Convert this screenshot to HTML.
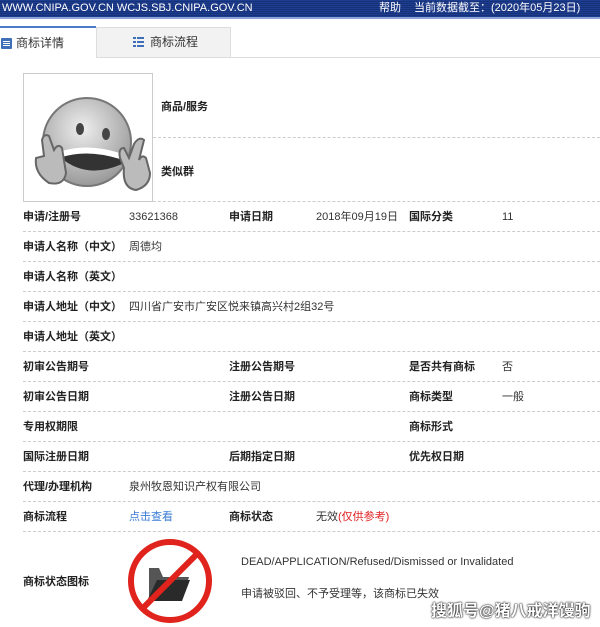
<!DOCTYPE html>
<html><head><meta charset="utf-8"><style>
*{margin:0;padding:0;box-sizing:border-box}
body{width:600px;height:627px;overflow:hidden;background:#fff;font-family:"Liberation Sans","Noto Sans CJK SC",sans-serif;font-size:11px;color:#333;position:relative}
.top{position:absolute;left:0;top:0;width:600px;height:19px;background:repeating-linear-gradient(#1d3d8f 0 1px,#16307a 1px 2px);color:#fff;font-size:11px;line-height:17px;border-bottom:2px solid #8ea4d8}
.top span{position:absolute;top:0}
.tabs{position:absolute;top:26px;left:0;width:600px;height:32px;border-bottom:1px solid #ddd}
.tab1{position:absolute;left:0;top:0;width:96px;height:32px;border-top:2px solid #4a7cc9;background:#fff;line-height:30px;padding-left:16px;font-size:12px}
.tab2{position:absolute;left:96px;top:1px;width:135px;height:31px;background:#f2f2f2;border:1px solid #ddd;line-height:29px;padding-left:53px;font-size:12px}
.row{position:absolute;left:23px;right:0;height:30px;border-bottom:1px dashed #ccc;line-height:30px}
.row b{position:absolute;font-weight:bold;color:#222}
.row span{position:absolute}
.img{position:absolute;left:23px;top:73px;width:130px;height:129px;border:1px solid #ccc;background:#fff}
</style></head><body>
<div class="top"><span style="left:2px">WWW.CNIPA.GOV.CN WCJS.SBJ.CNIPA.GOV.CN</span><span style="left:379px">帮助</span><span style="left:414px">当前数据截至：(2020年05月23日)</span></div>
<div class="tabs">
<div class="tab1"><svg style="position:absolute;left:1px;top:10px" width="11" height="11"><rect x="0" y="0" width="11" height="11" rx="1" fill="#3f6fb8"/><rect x="2" y="3" width="7" height="1" fill="#fff"/><rect x="2" y="5" width="7" height="1" fill="#fff"/><rect x="2" y="7" width="7" height="1" fill="#fff"/></svg>商标详情</div>
<div class="tab2"><svg style="position:absolute;left:36px;top:9px" width="11" height="10"><g fill="#3f6fb8"><rect x="0" y="0" width="3" height="2"/><rect x="4" y="0" width="7" height="2"/><rect x="0" y="4" width="3" height="2"/><rect x="4" y="4" width="7" height="2"/><rect x="0" y="8" width="3" height="2"/><rect x="4" y="8" width="7" height="2"/></g></svg>商标流程</div>
</div>
<div class="img"><svg width="128" height="127" viewBox="0 0 128 127">
<defs><radialGradient id="g" cx="45%" cy="35%" r="65%"><stop offset="0" stop-color="#eee"/><stop offset="1" stop-color="#999"/></radialGradient></defs>
<circle cx="63" cy="68" r="44" fill="url(#g)" stroke="#777" stroke-width="2"/>
<ellipse cx="56" cy="55" rx="4" ry="6" fill="#444"/><ellipse cx="82" cy="60" rx="4" ry="6" fill="#444"/>
<path d="M36 83 Q62 106 98 90 Q94 70 36 83Z" fill="#333"/><path d="M38 83 Q64 75 96 85 L96 79 Q64 69 38 77Z" fill="#fff"/>
<path d="M12 84 Q10 99 25 109 Q40 112 42 99 L38 74 Q34 69 30 76 L25 62 Q20 59 18 66 L20 82Z" fill="#bbb" stroke="#666" stroke-width="2"/>
<path d="M100 94 Q98 114 112 116 Q126 112 126 99 L122 84 Q118 80 115 86 L120 66 Q115 62 110 70 L105 84 L100 74 Q94 74 96 84Z" fill="#bbb" stroke="#666" stroke-width="2"/>
</svg></div>
<div style="position:absolute;left:161px;top:98px;font-weight:bold;color:#222">商品/服务</div>
<div style="position:absolute;left:153px;right:0;top:137px;border-top:1px dashed #ccc"></div>
<div style="position:absolute;left:161px;top:163px;font-weight:bold;color:#222">类似群</div>
<div style="position:absolute;left:23px;right:0;top:201px;border-top:1px dashed #ccc"></div>
<div class="row" style="top:202px"><b style="left:0">申请/注册号</b><span style="left:106px">33621368</span><b style="left:206px">申请日期</b><span style="left:293px">2018年09月19日</span><b style="left:386px">国际分类</b><span style="left:479px">11</span></div>
<div class="row" style="top:232px"><b style="left:0">申请人名称（中文）</b><span style="left:106px">周德均</span></div>
<div class="row" style="top:262px"><b style="left:0">申请人名称（英文）</b></div>
<div class="row" style="top:292px"><b style="left:0">申请人地址（中文）</b><span style="left:106px">四川省广安市广安区悦来镇高兴村2组32号</span></div>
<div class="row" style="top:322px"><b style="left:0">申请人地址（英文）</b></div>
<div class="row" style="top:352px"><b style="left:0">初审公告期号</b><b style="left:206px">注册公告期号</b><b style="left:386px">是否共有商标</b><span style="left:479px">否</span></div>
<div class="row" style="top:382px"><b style="left:0">初审公告日期</b><b style="left:206px">注册公告日期</b><b style="left:386px">商标类型</b><span style="left:479px">一般</span></div>
<div class="row" style="top:412px"><b style="left:0">专用权期限</b><b style="left:386px">商标形式</b></div>
<div class="row" style="top:442px"><b style="left:0">国际注册日期</b><b style="left:206px">后期指定日期</b><b style="left:386px">优先权日期</b></div>
<div class="row" style="top:472px"><b style="left:0">代理/办理机构</b><span style="left:106px">泉州牧恩知识产权有限公司</span></div>
<div class="row" style="top:502px"><b style="left:0">商标流程</b><span style="left:106px;color:#3a7bd5">点击查看</span><b style="left:206px">商标状态</b><span style="left:293px">无效<span style="position:static;color:#e02020">(仅供参考)</span></span></div>
<div style="position:absolute;left:23px;top:573px;font-weight:bold;color:#222">商标状态图标</div>
<svg style="position:absolute;left:127px;top:535px" width="86" height="92" viewBox="0 0 86 92">
<path d="M22 33 L22 66 L55 66 L62 42 L36 42 L32 33Z" fill="#555"/><path d="M20 66 L30 45 L63 45 L55 66Z" fill="#2a2a2a"/>
<circle cx="43" cy="46" r="39" fill="none" stroke="#e0231c" stroke-width="6"/>
<line x1="15" y1="74" x2="71" y2="18" stroke="#e0231c" stroke-width="6"/>
</svg>
<div style="position:absolute;left:241px;top:556px;font-size:11px">DEAD/APPLICATION/Refused/Dismissed or Invalidated</div>
<div style="position:absolute;left:241px;top:585px">申请被驳回、不予受理等，该商标已失效</div>
<div style="position:absolute;left:431px;top:597px;font-size:16px;font-weight:bold;color:#fff;text-shadow:0 0 2px #000,0 0 1px #000">搜狐号@猪八戒洋馒驹</div>
</body></html>
